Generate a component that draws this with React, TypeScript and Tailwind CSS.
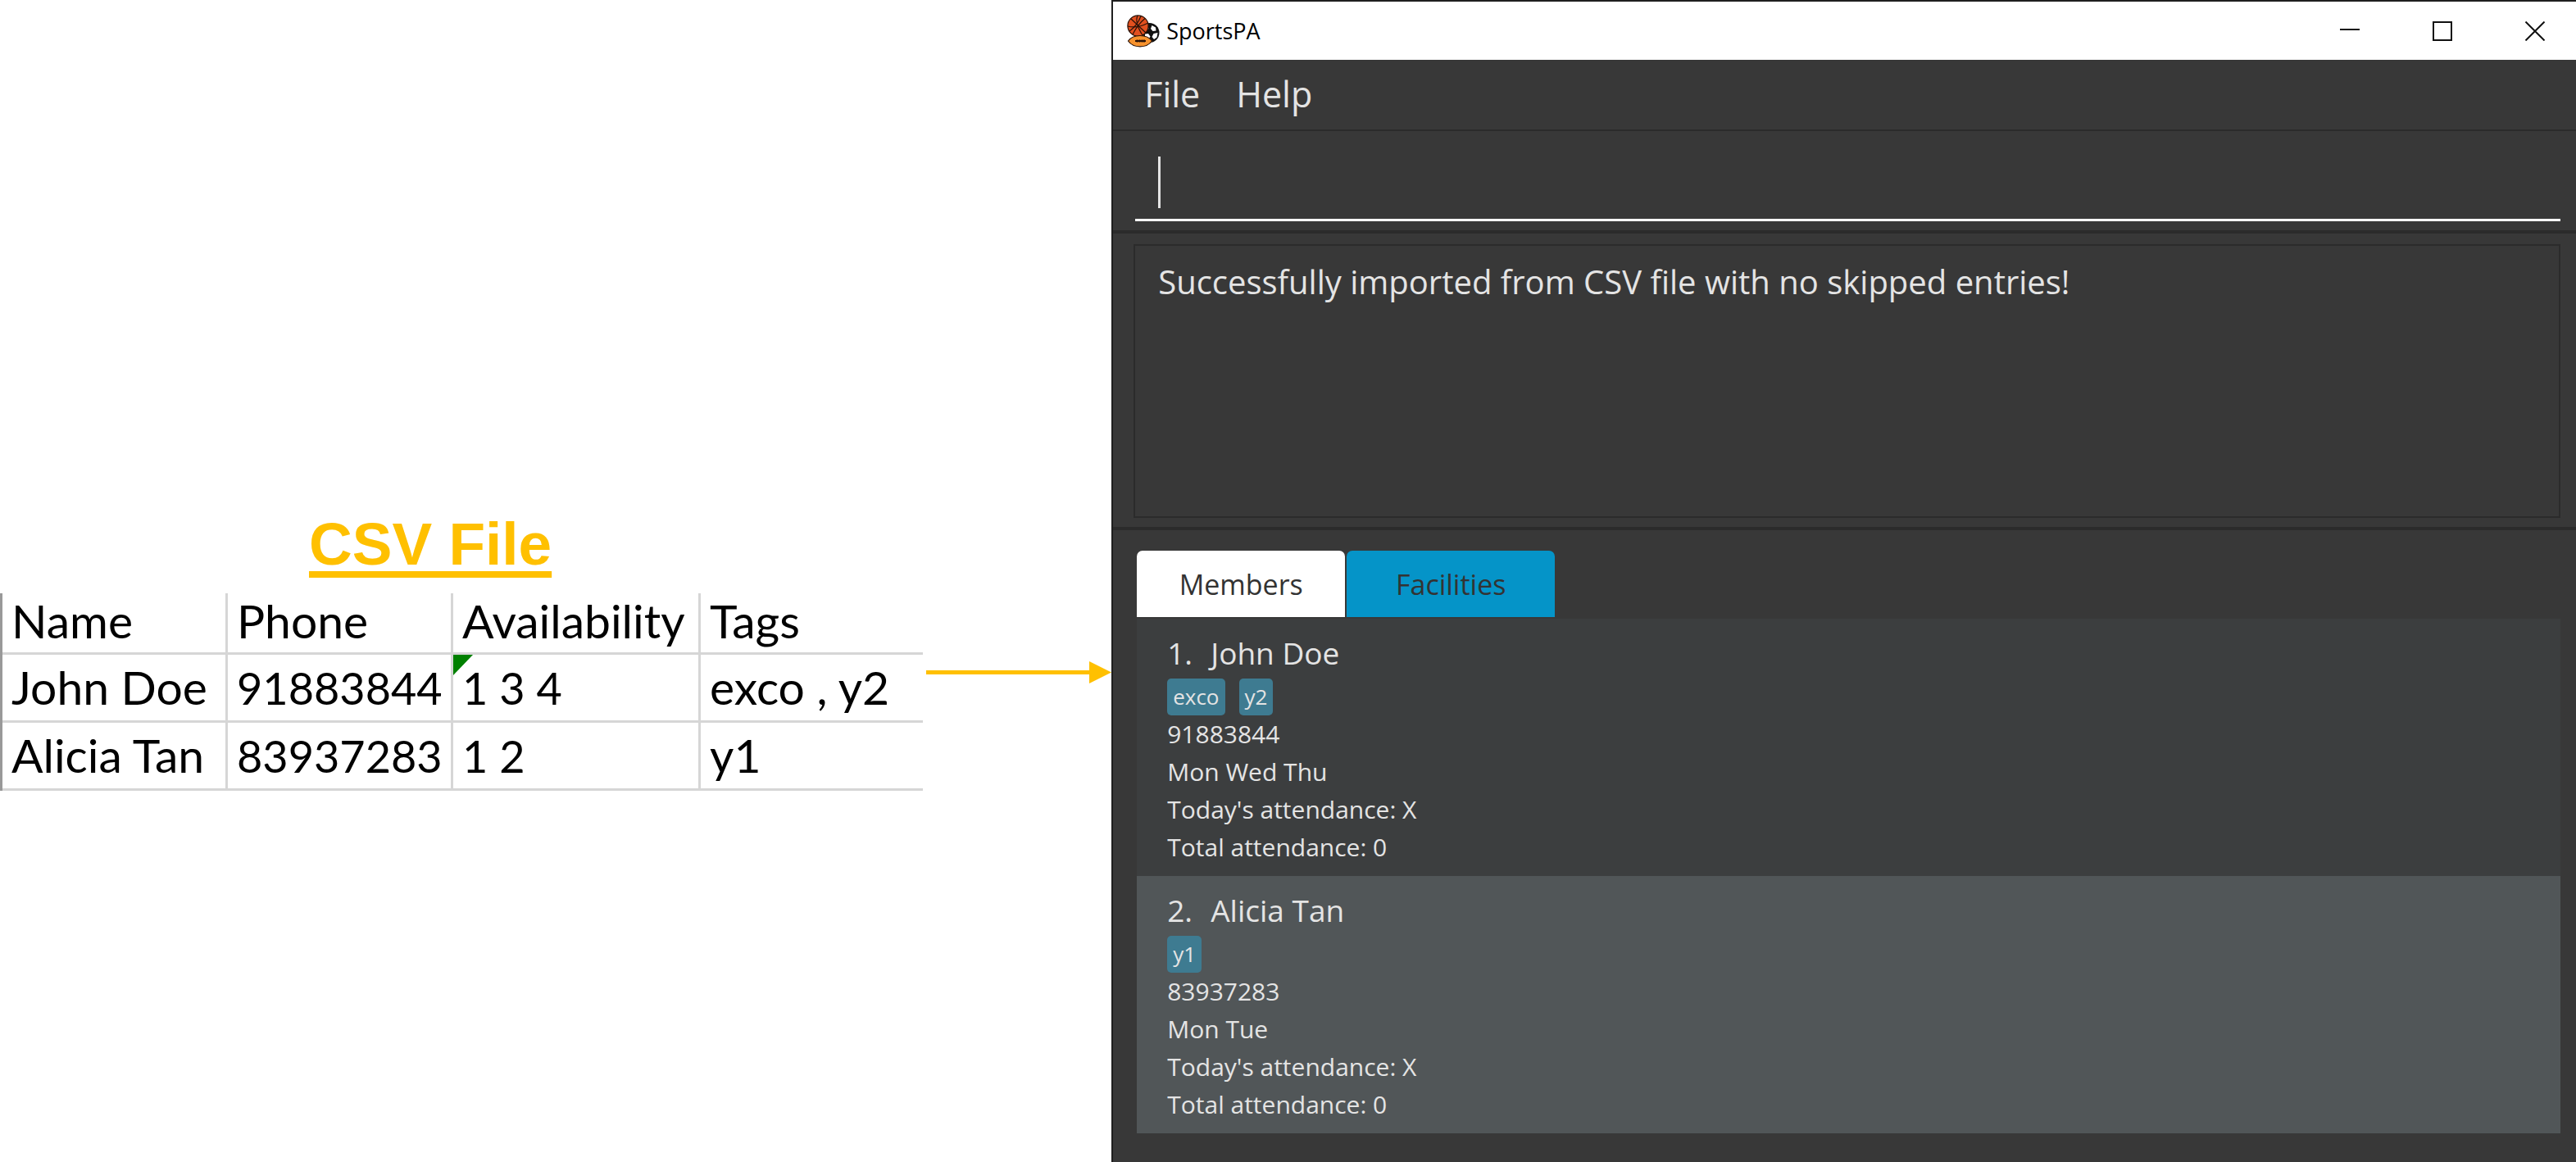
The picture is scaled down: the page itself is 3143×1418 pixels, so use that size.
import React from "react";

type Member = {
  name: string;
  tags: string[];
  phone: string;
  days: string;
};

const csvHeader = ["Name", "Phone", "Availability", "Tags"];

const csvRows = [
  { name: "John Doe", phone: "91883844", availability: "1 3 4", tags: "exco , y2", flagged: true },
  { name: "Alicia Tan", phone: "83937283", availability: "1 2", tags: "y1", flagged: false },
];

const members: Member[] = [
  { name: "John Doe", tags: ["exco", "y2"], phone: "91883844", days: "Mon Wed Thu" },
  { name: "Alicia Tan", tags: ["y1"], phone: "83937283", days: "Mon Tue" },
];

function SportsLogo() {
  return (
    <svg className="size-10 shrink-0" viewBox="0 0 40 40" aria-hidden="true">
      <circle cx="27.5" cy="22" r="12" fill="#111" />
      <g fill="#fff">
        <path d="M20 14.500l5-1.500 1.500 4-3.500 3.500-4-1z" />
        <path d="M30.500 13l4.500 2.500.5 4-4 .5-2.500-3z" />
        <path d="M32.500 23l5-1-1 5.500-3.500 2.500-2.500-3z" />
        <path d="M22 23.500l4-.5 2.500 3.500-1.500 2.500-5-1z" />
      </g>
      <circle cx="13.500" cy="13.500" r="12.600" fill="#e2501f" stroke="#2a1208" strokeWidth="1.200" />
      <g fill="none" stroke="#2a1208" strokeWidth="1.200">
        <path d="M5 5L23 22" />
        <path d="M22 4.500Q13 12 7 24" />
        <path d="M13 1Q9 9 19 25" />
        <path d="M1 14Q12 17 26 10" />
        <path d="M3 20Q13 13 17 1.500" />
      </g>
      <path
        d="M1.500 32C5 27 10 25.500 16 25.500S27 27 30.500 32C27 37 22 38.800 16 38.800S5 37 1.500 32z"
        fill="#f7922d"
        stroke="#2a1208"
        strokeWidth="1.200"
      />
      <path d="M10 32h13M12.500 30.500v3M15.500 30.500v3M18.500 30.500v3M21 30.500v3" stroke="#2a1208" strokeWidth="1.800" />
    </svg>
  );
}

function CsvTable() {
  const cell = "border-b-[3px] border-[#d6d6d6] pl-[11px] pb-[6px] align-baseline leading-[66px] whitespace-nowrap";
  return (
    <table className="w-[83%] table-fixed border-separate border-spacing-0 border-l-[3px] border-[#999999] text-left font-['Lato',sans-serif] text-[57px] text-black">
      <colgroup>
        <col className="w-[24.5%]" />
        <col className="w-[24.5%]" />
        <col className="w-[26.9%]" />
        <col className="w-[24.1%]" />
      </colgroup>
      <thead>
        <tr>
          {csvHeader.map((label) => (
            <th key={label} scope="col" className={`${cell} border-r-[3px] font-normal last:border-r-0`}>
              {label}
            </th>
          ))}
        </tr>
      </thead>
      <tbody>
        {csvRows.map((row) => (
          <tr key={row.name}>
            <td className={`${cell} border-r-[3px] pt-[6px]`}>{row.name}</td>
            <td className={`${cell} border-r-[3px] pt-[6px] text-[54px]`}>{row.phone}</td>
            <td className={`${cell} relative border-r-[3px] pt-[6px] text-[54px]`}>
              {row.flagged && (
                <svg className="absolute top-0 left-0 h-[25px] w-6" viewBox="0 0 24 25" aria-hidden="true">
                  <path d="M0 0h24L0 25z" fill="#008000" />
                </svg>
              )}
              {row.availability}
            </td>
            <td className={`${cell} pt-[6px]`}>{row.tags}</td>
          </tr>
        ))}
      </tbody>
    </table>
  );
}

function CsvPanel() {
  return (
    <section className="w-[43.15%] shrink-0 pt-[624px]" aria-labelledby="csv-title">
      <h1
        id="csv-title"
        className="mb-5 pl-[27.8%] font-['Liberation_Sans',sans-serif] text-[73px] leading-[80px] font-bold text-[#ffc000] underline decoration-[8px] underline-offset-[8px]"
      >
        CSV File
      </h1>
      <div className="flex items-start">
        <CsvTable />
        <div className="mt-[83px] ml-1 flex flex-1 items-center">
          <div className="h-[5px] flex-1 bg-[#ffc000]" />
          <svg className="h-[27px] w-[27px]" viewBox="0 0 27 27" aria-hidden="true">
            <path d="M0 0L27 13.500L0 27z" fill="#ffc000" />
          </svg>
        </div>
      </div>
    </section>
  );
}

function TitleBar() {
  const button = "flex h-full w-[100px] items-center justify-center";
  return (
    <header className="flex h-[71px] items-center bg-white pl-[17px] text-black">
      <SportsLogo />
      <span className="ml-2 text-[27px] leading-[36px]">SportsPA</span>
      <div className="ml-auto flex h-full gap-[13px]">
        <button type="button" aria-label="Minimize" className={button}>
          <svg className="size-6" viewBox="0 0 24 24" aria-hidden="true">
            <path d="M0 10h24" stroke="#111" strokeWidth="2" />
          </svg>
        </button>
        <button type="button" aria-label="Maximize" className={button}>
          <svg className="size-6" viewBox="0 0 24 24" aria-hidden="true">
            <path d="M1 1h22v22H1z" fill="none" stroke="#111" strokeWidth="2" />
          </svg>
        </button>
        <button type="button" aria-label="Close" className={button}>
          <svg className="size-6" viewBox="0 0 24 24" aria-hidden="true">
            <path d="M0.500 0.500l23 23M23.500 0.500l-23 23" stroke="#111" strokeWidth="2" />
          </svg>
        </button>
      </div>
    </header>
  );
}

function MemberCard({ member, index }: { member: Member; index: number }) {
  return (
    <li className="bg-[#3c3e3f] pt-[17px] pb-3 pl-[37px] even:bg-[#515658]">
      <h2 className="flex text-[37px] leading-[50px]">
        <span className="w-[53px]">{index}.</span>
        {member.name}
      </h2>
      <div className="mt-[6px] flex gap-[17px] text-[26px] leading-[45px]">
        {member.tags.map((tag) => (
          <span key={tag} className="rounded-[5px] bg-[#3e7b91] px-[7px]">
            {tag}
          </span>
        ))}
      </div>
      <div className="text-[30px] leading-[46px]">
        <p>{member.phone}</p>
        <p>{member.days}</p>
        <p>Today's attendance: X</p>
        <p>Total attendance: 0</p>
      </div>
    </li>
  );
}

function AppWindow() {
  const tab = "h-[81px] w-[254px] rounded-t-[7px] text-[34px] leading-[48px] text-[#333333]";
  return (
    <main className="flex-1 border-t-2 border-l-2 border-[#1f1f1f] bg-[#383838] font-['Open_Sans',sans-serif] text-[#e4e4e4]">
      <TitleBar />
      <nav className="flex h-[87px] items-center gap-11 border-b-2 border-[#2b2b2b] pb-0.5 pl-[38px] text-[43px] leading-[58px]">
        <button type="button">File</button>
        <button type="button">Help</button>
      </nav>
      <div className="border-b-4 border-[#2b2b2b] pr-[19px] pb-[11px] pl-[27px]">
        <div className="relative">
          <input
            type="text"
            aria-label="Command"
            className="block h-[110px] w-full border-b-[3px] border-white bg-transparent px-7 text-[40px] caret-transparent outline-none"
          />
          <span className="absolute top-[31px] left-7 h-[63px] w-[3px] bg-[#e4e4e4]" />
        </div>
      </div>
      <div className="border-b-4 border-[#2b2b2b] pt-[13px] pr-[19px] pb-[11px] pl-[25px]">
        <textarea
          readOnly
          aria-label="Result"
          className="block h-[334px] w-full resize-none border-2 border-[#2b2b2b] bg-transparent px-7 pt-[17px] text-[40px] leading-[54px] outline-none"
          value="Successfully imported from CSV file with no skipped entries!"
        />
      </div>
      <div className="pt-[25px] pr-[19px] pl-[29px]">
        <div role="tablist" className="mb-0.5 flex gap-0.5">
          <button type="button" role="tab" aria-selected="true" className={`${tab} bg-white`}>
            Members
          </button>
          <button type="button" role="tab" aria-selected="false" className={`${tab} bg-[#0594c8]`}>
            Facilities
          </button>
        </div>
        <ul>
          {members.map((member, i) => (
            <MemberCard key={member.name} member={member} index={i + 1} />
          ))}
        </ul>
      </div>
    </main>
  );
}

export default function App() {
  return (
    <div className="flex min-h-screen bg-white">
      <CsvPanel />
      <AppWindow />
    </div>
  );
}
